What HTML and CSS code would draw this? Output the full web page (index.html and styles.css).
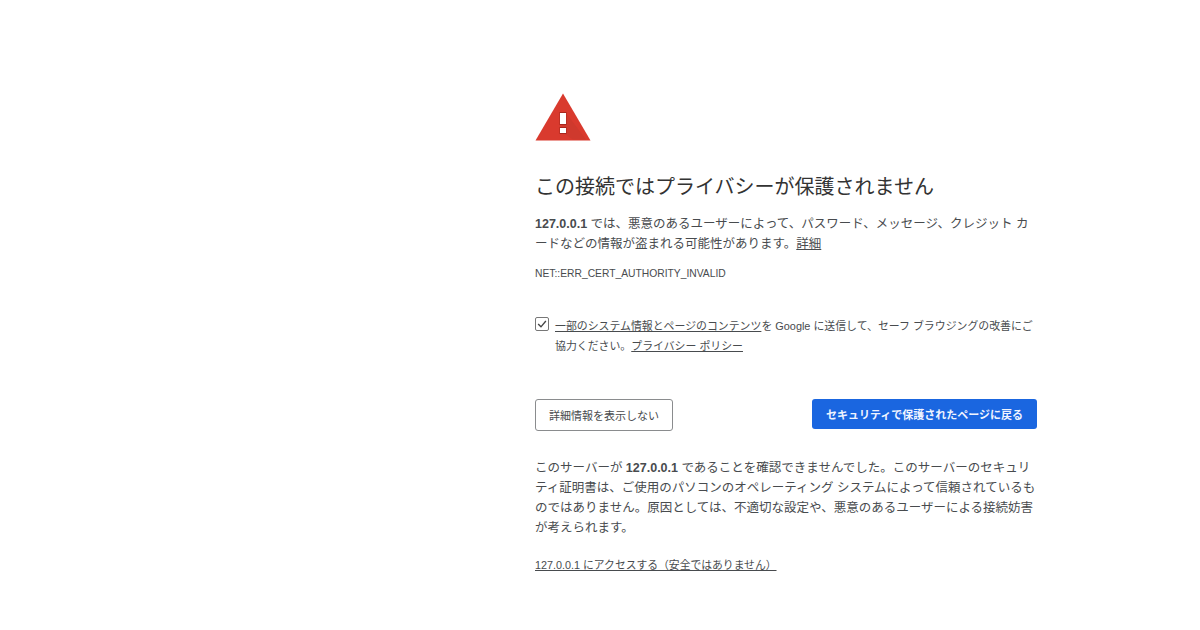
FILE: index.html
```html
<!DOCTYPE html>
<html lang="ja">
<head>
    <meta charset="UTF-8">
    <title>プライバシー エラー</title>
    <link rel="stylesheet" href="styles.css">
</head>
<body>
    <div class="interstitial">
        <svg class="warn_icon" width="56" height="48" viewBox="0 0 56 48">
            <path d="M28 0.5 L55.5 47.5 L0.5 47.5 Z" fill="#d93a2e"/>
            <path d="M31 20 L51 46.5 L38 46.5 L25 38 Z" fill="#cf392d"/>
            <rect x="24.5" y="19" width="7" height="13" fill="#a8261d"/>
            <rect x="24.5" y="34" width="7" height="7" fill="#a8261d"/>
            <rect x="25" y="20" width="6" height="11" fill="#fff"/>
            <rect x="25" y="35" width="6" height="5" fill="#fff"/>
        </svg>
        <h1 class="title">この接続ではプライバシーが保護されません</h1>
        <p class="message"><b>127.0.0.1</b> では、悪意のあるユーザーによって、パスワード、メッセージ、クレジット カードなどの情報が盗まれる可能性があります。<a href="#" class="link">詳細</a></p>
        <p class="error_code">NET::ERR_CERT_AUTHORITY_INVALID</p>
        <div class="opt_in">
            <span class="checkbox">
                <svg width="12" height="12" viewBox="0 0 14 14"><path d="M2.5 7 L5.8 10.3 L11.5 3.5" fill="none" stroke="#444" stroke-width="1.6"/></svg>
            </span>
            <p class="opt_text"><a href="#" class="link">一部のシステム情報とページのコンテンツ</a>を Google に送信して、セーフ ブラウジングの改善にご協力ください。<a href="#" class="link">プライバシー ポリシー</a></p>
        </div>
        <div class="buttons">
            <button class="button secondary">詳細情報を表示しない</button>
            <button class="button primary">セキュリティで保護されたページに戻る</button>
        </div>
        <p class="details">このサーバーが <b>127.0.0.1</b> であることを確認できませんでした。このサーバーのセキュリティ証明書は、ご使用のパソコンのオペレーティング システムによって信頼されているものではありません。原因としては、不適切な設定や、悪意のあるユーザーによる接続妨害が考えられます。</p>
        <a href="#" class="link proceed">127.0.0.1 にアクセスする（安全ではありません）</a>
    </div>
</body>
</html>
```

FILE: styles.css
```css
body {
    margin: 0;
    background: #fff;
    color: #484b4e;
    font-family: "Liberation Sans", "Noto Sans CJK JP", sans-serif;
    font-size: 12px;
}

.interstitial {
    width: 502px;
    margin-left: 535px;
    padding-top: 93px;
}

.warn_icon {
    display: block;
}

.title {
    margin: 34px 0 0;
    color: #333;
    font-size: 20px;
    font-weight: 400;
    line-height: 24px;
}

.message {
    margin: 15px 0 0;
    font-size: 12.5px;
    line-height: 20px;
}

.error_code {
    margin: 12px 0 0;
    font-size: 10.3px;
    line-height: 16px;
}

.link {
    color: #484b4e;
    text-decoration: underline;
}

.opt_in {
    display: flex;
    gap: 6px;
    margin-top: 34px;
}

.checkbox {
    flex: none;
    width: 12px;
    height: 12px;
    margin-top: 1px;
    border: 1px solid #777;
    border-radius: 2px;
}

.opt_text {
    margin: 0;
    font-size: 10.9px;
    line-height: 20px;
}

.buttons {
    display: flex;
    justify-content: space-between;
    margin-top: 43px;
}

.button {
    height: 32px;
    border-radius: 3px;
    font-family: inherit;
    font-size: 11px;
}

.secondary {
    width: 138px;
    background: #fff;
    border: 1px solid #8a8c8e;
    color: #484b4e;
}

.primary {
    width: 225px;
    height: 30px;
    background: #1a66e0;
    border: none;
    color: #f0f4ff;
    font-weight: 700;
}

.details {
    margin: 27px 0 0;
    font-size: 12.5px;
    line-height: 20px;
}

.proceed {
    display: block;
    margin-top: 18px;
    font-size: 10.8px;
}
```
